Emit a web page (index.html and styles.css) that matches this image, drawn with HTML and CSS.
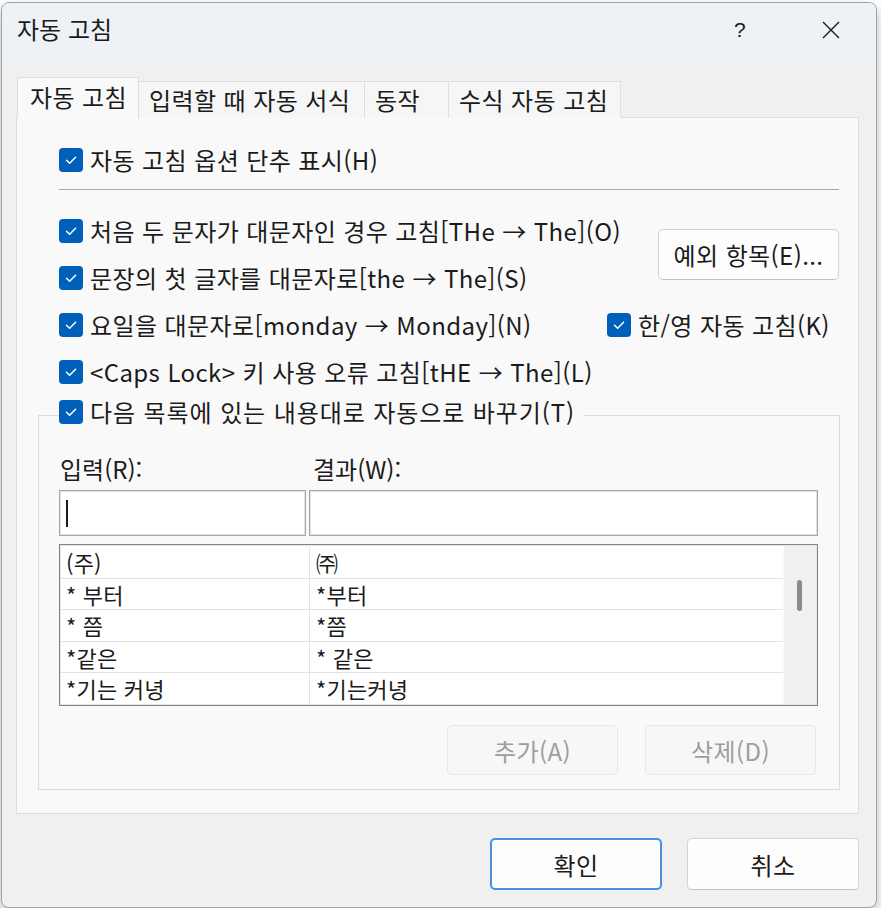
FILE: index.html
```html
<!DOCTYPE html>
<html lang="ko">
<head>
<meta charset="utf-8">
<title>자동 고침</title>
<link rel="stylesheet" href="styles.css">
</head>
<body>
<div class="window">
  <div class="titlebar">
    <span class="title">자동 고침</span>
    <span class="help">?</span>
    <span class="close"><svg width="18" height="18" viewBox="0 0 18 18"><path d="M1 1 L17 17 M17 1 L1 17" stroke="#1a1a1a" stroke-width="1.4" fill="none"/></svg></span>
  </div>
  <div class="main">
    <div class="tabs">
      <div class="tab active t1">자동 고침</div>
      <div class="tab t2">입력할 때 자동 서식</div>
      <div class="tab t3">동작</div>
      <div class="tab t4">수식 자동 고침</div>
    </div>
    <div class="panel">
      <label class="check top-check"><span class="box"><svg viewBox="0 0 24 24"><path d="M7.5 12.2 L10.6 15.2 L16.6 9.2" /></svg></span><span>자동 고침 옵션 단추 표시(H)</span></label>
      <div class="sep"></div>
      <div class="opts">
        <label class="check r1"><span class="box"><svg viewBox="0 0 24 24"><path d="M7.5 12.2 L10.6 15.2 L16.6 9.2" /></svg></span><span>처음 두 문자가 대문자인 경우 고침[THe → The](O)</span></label>
        <button class="btn exc">예외 항목(E)...</button>
        <label class="check r2"><span class="box"><svg viewBox="0 0 24 24"><path d="M7.5 12.2 L10.6 15.2 L16.6 9.2" /></svg></span><span>문장의 첫 글자를 대문자로[the → The](S)</span></label>
        <label class="check r3"><span class="box"><svg viewBox="0 0 24 24"><path d="M7.5 12.2 L10.6 15.2 L16.6 9.2" /></svg></span><span>요일을 대문자로[monday → Monday](N)</span></label>
        <label class="check hy"><span class="box"><svg viewBox="0 0 24 24"><path d="M7.5 12.2 L10.6 15.2 L16.6 9.2" /></svg></span><span>한/영 자동 고침(K)</span></label>
        <label class="check r4"><span class="box"><svg viewBox="0 0 24 24"><path d="M7.5 12.2 L10.6 15.2 L16.6 9.2" /></svg></span><span>&lt;Caps Lock&gt; 키 사용 오류 고침[tHE → The](L)</span></label>
      </div>
      <fieldset class="group">
        <legend><label class="check"><span class="box"><svg viewBox="0 0 24 24"><path d="M7.5 12.2 L10.6 15.2 L16.6 9.2" /></svg></span><span class="wide">다음 목록에 있는 내용대로 자동으로 바꾸기(T)</span></label></legend>
        <div class="io">
          <div class="lbl">입력(R):</div>
          <div class="lbl lbl2">결과(W):</div>
          <div class="input"><span class="caret"></span></div>
          <div class="input"></div>
        </div>
        <div class="list">
          <div class="rows">
            <div class="row"><div class="c1">(주)</div><div class="c2">㈜</div></div>
            <div class="row"><div class="c1">* 부터</div><div class="c2">*부터</div></div>
            <div class="row"><div class="c1">* 쯤</div><div class="c2">*쯤</div></div>
            <div class="row"><div class="c1">*같은</div><div class="c2">* 같은</div></div>
            <div class="row"><div class="c1">*기는 커녕</div><div class="c2">*기는커녕</div></div>
          </div>
          <div class="scroll"><div class="thumb"></div></div>
        </div>
        <div class="gbtns">
          <button class="btn dis">추가(A)</button>
          <button class="btn dis">삭제(D)</button>
        </div>
      </fieldset>
    </div>
    <div class="footer">
      <button class="btn ok">확인</button>
      <button class="btn">취소</button>
    </div>
  </div>
</div>
</body>
</html>
```

FILE: styles.css
```css
* { box-sizing: border-box; }
html, body { margin: 0; padding: 0; }
body {
  background: #ffffff;
  font-family: "Noto Sans CJK KR", "Noto Sans", sans-serif;
  color: #1b1b1b;
  font-size: 24px;
  letter-spacing: 0.4px;
  line-height: 1.2;
}
.window {
  margin: 2px 0 0 1px;
  width: 876px;
  height: 906px;
  border: 1px solid #a2a2a2;
  border-radius: 8px;
  background: #f0f0f0;
  overflow: hidden;
  box-shadow: 0 6px 14px rgba(0,0,0,0.28);
  display: flex;
  flex-direction: column;
}
.titlebar {
  height: 57px;
  flex: none;
  background: #eef2f6;
  display: flex;
  align-items: center;
  padding-left: 15px;
}
.title { font-size: 24px; letter-spacing: 0; flex: 1; padding-bottom: 4px; }
.help { font-family: "Liberation Sans", sans-serif; font-size: 21px; width: 88px; padding-bottom: 3px; }
.close { width: 54px; display: flex; padding-bottom: 4px; }
.main {
  flex: 1;
  padding: 17px 17px 0 14px;
}
.tabs {
  display: flex;
  align-items: flex-end;
  height: 41px;
  position: relative;
  z-index: 1;
  margin-bottom: -1px;
}
.tab {
  height: 37px;
  border: 1px solid #dedede;
  border-bottom: none;
  border-left: none;
  background: #f6f6f6;
  padding-left: 10px;
  display: flex;
  align-items: center;
  white-space: nowrap;
}
.tab.active {
  height: 42px;
  margin-left: 1px;
  background: #f9f9f9;
  border-left: 1px solid #dedede;
  margin-bottom: -1px;
  padding-bottom: 3px;
}
.t1 { width: 122px; padding-left: 12px; }
.t2 { width: 226px; }
.t3 { width: 84px; }
.t4 { width: 172px; }
.panel {
  width: 843px;
  height: 697px;
  border: 1px solid #dedede;
  background: #f9f9f9;
  padding: 0 19px 0 21px;
}
.check {
  display: flex;
  align-items: center;
  gap: 7px;
  white-space: nowrap;
}
.box {
  width: 24px;
  height: 24px;
  border-radius: 4px;
  background: #005fb8;
  flex: none;
  display: flex;
}
.box svg { width: 24px; height: 24px; }
.box path { fill: none; stroke: #ffffff; stroke-width: 1.5; stroke-linecap: round; stroke-linejoin: round; }
.top-check { height: 30px; margin: 27px 0 0 21px; }
.sep {
  height: 1px;
  background: #a8a8a8;
  margin: 14px 0 0 21px;
}
.opts {
  margin: 17.5px 0 0 21px;
  display: grid;
  grid-template-columns: minmax(0, 1fr) 232px;
  grid-template-rows: repeat(4, 47px);
  align-items: center;
}
.r1 { grid-row: 1; grid-column: 1; }
.r2 { grid-row: 2; grid-column: 1; }
.r3 { grid-row: 3; grid-column: 1; }
.r4 { grid-row: 4; grid-column: 1; }
.hy { grid-row: 3; grid-column: 2; }
.exc {
  grid-row: 1 / span 2;
  grid-column: 2;
  justify-self: end;
  width: 181px;
  height: 51px;
}
.btn {
  font-family: inherit;
  font-size: 24px;
  letter-spacing: 0.4px;
  color: #1b1b1b;
  background: #fdfdfd;
  border: 1px solid #d4d4d4;
  border-bottom-color: #c2c2c2;
  border-radius: 5px;
  padding: 0;
}
.group {
  margin: 1.5px 0 0 0;
  width: 802px;
  border: 1px solid #dcdcdc;
  padding: 0 21px 14px 20px;
  min-width: 0;
}
.group legend {
  padding: 0 9px 6px 0;
  margin-left: 0;
}
.group legend .check { height: 30px; }
.wide { letter-spacing: 0.9px; }
.io {
  margin-top: 22px;
  display: grid;
  grid-template-columns: 247px 509px;
  column-gap: 3px;
  row-gap: 7px;
}
.lbl { height: 28px; line-height: 28px; padding-left: 1px; letter-spacing: 0; }
.lbl2 { padding-left: 4px; }
.input {
  height: 46px;
  background: #ffffff;
  border: 1px solid #a4a6aa;
  box-shadow: inset 0 0 0 1px #e2e2e2;
  padding: 9px 0 0 6px;
}
.caret { display: block; width: 2px; height: 27px; background: #1b1b1b; }
.list {
  margin-top: 8px;
  height: 162px;
  border: 1px solid #80858c;
  padding: 1px;
  background: #e6e6e6;
  display: flex;
  overflow: hidden;
}
.rows {
  flex: 1;
  background: #ffffff;
  padding-top: 1px;
  font-size: 22px;
  letter-spacing: 0.2px;
  overflow: hidden;
}
.row {
  display: grid;
  grid-template-columns: 249px 1fr;
  height: 31.5px;
  border-bottom: 1px solid #e2e2e2;
}
.c1, .c2 { display: flex; align-items: center; white-space: nowrap; }
.c1 { padding-left: 5px; border-right: 1px solid #e4e4e4; }
.c2 { padding-left: 6px; }
.scroll {
  width: 33px;
  flex: none;
  background: #f0f0f0;
  border-left: 1px solid #fafafa;
  padding: 34px 0 0 13px;
}
.thumb { width: 5px; height: 31px; border-radius: 3px; background: #8a8a8a; }
.gbtns {
  margin-top: 19px;
  display: flex;
  justify-content: flex-end;
  gap: 27px;
  padding-right: 2px;
}
.btn.dis {
  width: 171px;
  height: 50px;
  color: #9d9d9d;
  background: #f7f7f7;
  border: 1px solid #e6e6e6;
}
.footer {
  margin-top: 24px;
  display: flex;
  justify-content: flex-end;
  gap: 25px;
}
.footer .btn { width: 172px; height: 52px; }
.footer .btn.ok { border: 2px solid #4a90d9; }
```
